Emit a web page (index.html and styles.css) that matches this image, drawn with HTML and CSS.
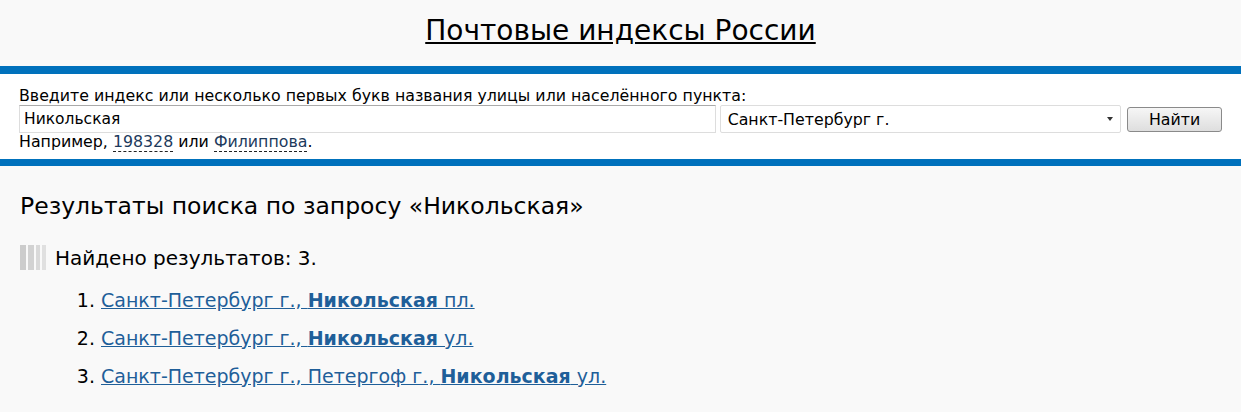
FILE: index.html
```html
<!DOCTYPE html>
<html lang="ru">
<head>
  <meta charset="UTF-8">
  <title>Почтовые индексы России</title>
  <link rel="stylesheet" href="styles.css">
</head>
<body>

<div class="header">
  <h1><a href="#">Почтовые индексы России</a></h1>
</div>

<form class="search">
  <label for="q">Введите индекс или несколько первых букв названия улицы или населённого пункта:</label>
  <div class="search-row">
    <input id="q" type="text" value="Никольская">
    <div class="region">
      <span>Санкт-Петербург г.</span>
      <span class="arrow"></span>
    </div>
    <button type="button">Найти</button>
  </div>
  <div class="hint">Например, <span class="dotted">198328</span> или <span class="dotted">Филиппова</span>.</div>
</form>

<div class="content">
  <h2>Результаты поиска по запросу «Никольская»</h2>
  <div class="found">
    <span class="stripes"><i></i><i></i><i></i><i></i></span>
    Найдено результатов: 3.
  </div>
  <ol class="results">
    <li><a href="#">Санкт-Петербург г., <b>Никольская</b> пл.</a></li>
    <li><a href="#">Санкт-Петербург г., <b>Никольская</b> ул.</a></li>
    <li><a href="#">Санкт-Петербург г., Петергоф г., <b>Никольская</b> ул.</a></li>
  </ol>
</div>

</body>
</html>
```

FILE: styles.css
```css
html, body {
  margin: 0;
  padding: 0;
  background: #f9f9f9;
  color: #000;
  font-family: "DejaVu Sans", sans-serif;
}

.header {
  height: 66px;
  display: flex;
  align-items: center;
  justify-content: center;
}
.header h1 {
  margin: 0 0 5px;
  font-size: 28px;
  font-weight: normal;
}
.header h1 a {
  color: #000;
}

.search {
  background: #fff;
  border-top: 8px solid #0071bc;
  border-bottom: 7px solid #0071bc;
  padding: 14px 19px 8px;
  font-size: 15.8px;
}
.search label {
  display: block;
  line-height: 16px;
}
.search-row {
  display: flex;
  align-items: center;
  gap: 4px;
  margin-top: 1px;
}
.search-row input {
  box-sizing: border-box;
  width: 699px;
  height: 28px;
  margin: 0;
  padding: 0 4px;
  border: 1px solid #ddd;
  border-top-color: #aaa;
  font: inherit;
  font-size: 15.5px;
}
.region {
  box-sizing: border-box;
  width: 403px;
  height: 28px;
  border: 1px solid #ddd;
  border-radius: 2px;
  display: flex;
  align-items: center;
  justify-content: space-between;
  padding: 0 7px;
}
.arrow {
  border-left: 3px solid transparent;
  border-right: 3px solid transparent;
  border-top: 4px solid #333;
}
.search-row button {
  margin-left: 2px;
  width: 95px;
  height: 25px;
  border: 1px solid #8a8a8a;
  border-radius: 3px;
  background: linear-gradient(#f6f6f6, #dedede);
  font: inherit;
}
.hint {
  line-height: 18px;
}
.dotted {
  color: #1d3a5c;
  border-bottom: 1px dashed #222;
}

.content {
  padding: 20px 20px;
}
.content h2 {
  margin: 0;
  font-size: 23.5px;
  font-weight: normal;
  line-height: 40px;
}
.found {
  display: flex;
  align-items: center;
  gap: 9px;
  margin-top: 19px;
  font-size: 20px;
}
.stripes {
  display: flex;
  gap: 2px;
  height: 25px;
}
.stripes i {
  width: 6px;
  background: #ccc;
}
.stripes i:nth-child(2) { width: 6px; background: #d2d2d2; }
.stripes i:nth-child(3) { width: 4px; background: #d9d9d9; }
.stripes i:nth-child(4) { width: 4px; background: #e0e0e0; }

.results {
  margin: 19px 0 0;
  padding-left: 81px;
  font-size: 19px;
}
.results li {
  line-height: 22px;
  margin-bottom: 16px;
}
.results a {
  color: #1f5f99;
}
```
